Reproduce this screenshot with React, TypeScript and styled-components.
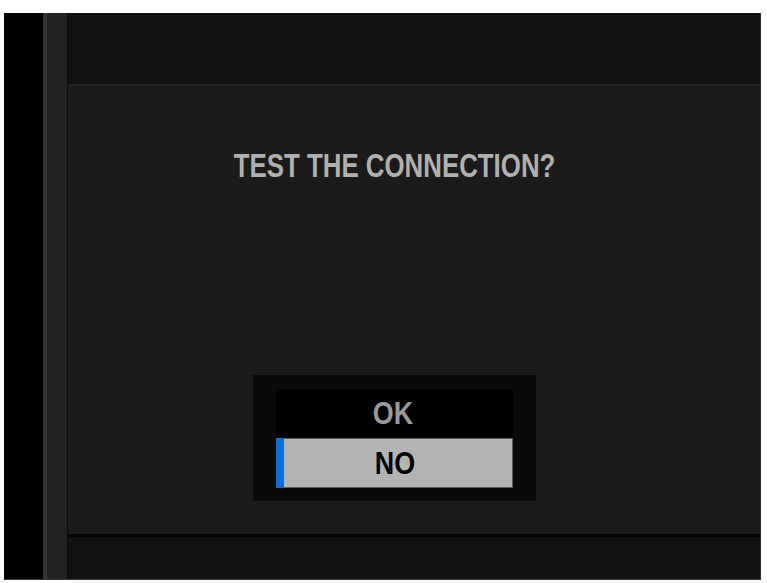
import styled, { createGlobalStyle } from "styled-components";

const GlobalStyle = createGlobalStyle`
  html, body {
    margin: 0;
    padding: 0;
    background: #ffffff;
  }
`;

const Frame = styled.div`
  width: 767px;
  height: 583px;
  padding: 13px 6px 3px 4px;
  box-sizing: border-box;
`;

const Screen = styled.div`
  display: flex;
  height: 100%;
  background: #000;
  border-right: 1px solid #2a2a2a;
  border-bottom: 1px solid #3a3a3a;
  box-sizing: border-box;
  font-family: "Liberation Sans", Arial, sans-serif;
  font-weight: 700;
`;

const Rail = styled.div`
  width: 39px;
  flex: none;
  background: #000;
`;

const Sidebar = styled.div`
  width: 20px;
  flex: none;
  background: #222;
  border-left: 4px solid #333;
  border-right: 1px solid #0a0a0a;
`;

const Main = styled.div`
  flex: 1;
  display: flex;
  flex-direction: column;
`;

const TopBar = styled.div`
  height: 71px;
  flex: none;
  background: #111;
  border-bottom: 2px solid #222;
`;

const Content = styled.div`
  flex: 1;
  display: flex;
  flex-direction: column;
  align-items: center;
  padding-right: 39px;
  background: #1b1b1b;
  border-bottom: 3px solid #050505;
`;

/* condensed face is not installed, so squeeze the regular bold */
const Narrow = styled.span<{ $scale: number }>`
  display: inline-block;
  white-space: nowrap;
  transform: scaleX(${(p) => p.$scale});
  transform-origin: center;
`;

const Title = styled.div`
  margin-top: 60px;
  font-size: 34px;
  line-height: 38px;
  color: #b0b0b0;
`;

const Dialog = styled.div`
  margin-top: auto;
  margin-bottom: 33px;
  width: 283px;
  box-sizing: border-box;
  padding: 14px 23px 13px;
  background: #0a0a0a;
`;

const Option = styled.div<{ $selected?: boolean }>`
  height: ${(p) => (p.$selected ? "50px" : "49px")};
  display: flex;
  align-items: center;
  justify-content: center;
  box-sizing: border-box;
  font-size: 32px;
  background: ${(p) => (p.$selected ? "#b4b4b4" : "#000")};
  color: ${(p) => (p.$selected ? "#000" : "#9a9a9a")};
  border: 1px solid ${(p) => (p.$selected ? "#5c5c5c" : "#000")};
  border-left: ${(p) => (p.$selected ? "8px solid #0b6fe0" : "1px solid #000")};
  padding-right: ${(p) => (p.$selected ? "7px" : "3px")};
`;

const BottomBar = styled.div`
  height: 42px;
  flex: none;
  background: #111;
`;

export default function App() {
  return (
    <>
      <GlobalStyle />
      <Frame>
        <Screen>
          <Rail />
          <Sidebar />
          <Main>
            <TopBar />
            <Content>
              <Title>
                <Narrow $scale={0.76}>TEST THE CONNECTION?</Narrow>
              </Title>
              <Dialog>
                <Option>
                  <Narrow $scale={0.84}>OK</Narrow>
                </Option>
                <Option $selected>
                  <Narrow $scale={0.84}>NO</Narrow>
                </Option>
              </Dialog>
            </Content>
            <BottomBar />
          </Main>
        </Screen>
      </Frame>
    </>
  );
}
